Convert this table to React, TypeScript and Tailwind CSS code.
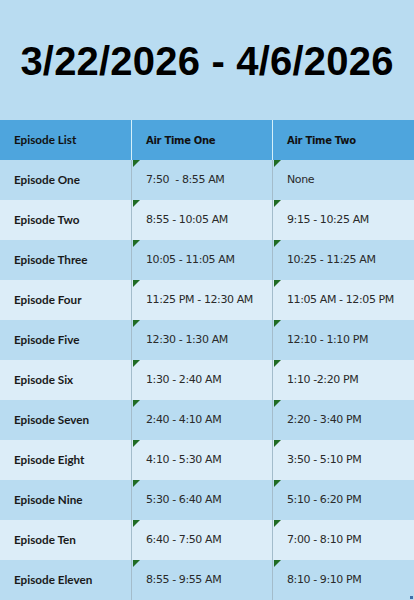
import React from "react";

const rows: [string, string, string][] = [
  ["Episode One", "7:50  - 8:55 AM", "None"],
  ["Episode Two", "8:55 - 10:05 AM", "9:15 - 10:25 AM"],
  ["Episode Three", "10:05 - 11:05 AM", "10:25 - 11:25 AM"],
  ["Episode Four", "11:25 PM - 12:30 AM", "11:05 AM - 12:05 PM"],
  ["Episode Five", "12:30 - 1:30 AM", "12:10 - 1:10 PM"],
  ["Episode Six", "1:30 - 2:40 AM", "1:10 -2:20 PM"],
  ["Episode Seven", "2:40 - 4:10 AM", "2:20 - 3:40 PM"],
  ["Episode Eight", "4:10 - 5:30 AM", "3:50 - 5:10 PM"],
  ["Episode Nine", "5:30 - 6:40 AM", "5:10 - 6:20 PM"],
  ["Episode Ten", "6:40 - 7:50 AM", "7:00 - 8:10 PM"],
  ["Episode Eleven", "8:55 - 9:55 AM", "8:10 - 9:10 PM"],
];

function Tri() {
  return (
    <svg className="absolute left-[1px] top-0" width="7" height="7" viewBox="0 0 7 7">
      <polygon points="0,0 7,0 0,7" fill="#1f6b23" />
    </svg>
  );
}

export default function App() {
  return (
    <div className="w-[414px] h-[600px] overflow-hidden bg-[#b9dcf1] relative">
      <div className="h-[120px] flex items-center justify-center pt-[2px]">
        <h1
          className="text-[40px] font-bold tracking-[0.2px] text-black leading-none"
          style={{ fontFamily: '"Liberation Sans", Arial, sans-serif' }}
        >
          3/22/2026 - 4/6/2026
        </h1>
      </div>
      <div
        className="grid grid-cols-[131px_141px_142px] text-[11px]"
        style={{ fontFamily: '"DejaVu Sans", sans-serif' }}
      >
        <div
          className="h-[40px] bg-[#4ea5dd] flex items-center pl-[14px] font-bold text-[#111] text-[11.7px]"
          style={{ fontFamily: 'Lato, sans-serif' }}
        >
          Episode List
        </div>
        <div className="h-[40px] bg-[#4ea5dd] border-l border-[#d4f0fa] flex items-center pl-[14px] font-bold text-[#111] text-[10px] tracking-[-0.3px]">
          Air Time One
        </div>
        <div className="h-[40px] bg-[#4ea5dd] border-l border-[#d4f0fa] flex items-center pl-[14px] font-bold text-[#111] text-[10px] tracking-[-0.3px]">
          Air Time Two
        </div>
        {rows.map((r, i) => {
          const bg = i % 2 === 0 ? "bg-[#b9dcf1]" : "bg-[#dcedf8]";
          return (
            <React.Fragment key={r[0]}>
              <div
                className={`h-[40px] ${bg} flex items-center pl-[14px] font-bold text-[#1a1a1a] text-[11.7px]`}
                style={{ fontFamily: 'Lato, sans-serif' }}
              >
                {r[0]}
              </div>
              <div className={`h-[40px] ${bg} relative border-l border-[#a3bccb] flex items-center pl-[14px] text-[#2a2a2a] tracking-[-0.4px] whitespace-pre`}>
                <Tri />
                {r[1]}
              </div>
              <div className={`h-[40px] ${bg} relative border-l border-[#a3bccb] flex items-center pl-[14px] text-[#2a2a2a] tracking-[-0.4px] whitespace-pre`}>
                <Tri />
                {r[2]}
              </div>
            </React.Fragment>
          );
        })}
      </div>
      <div className="absolute right-[1px] bottom-[1px] w-[3px] h-[3px] bg-[#3d6fa8]" />
    </div>
  );
}
